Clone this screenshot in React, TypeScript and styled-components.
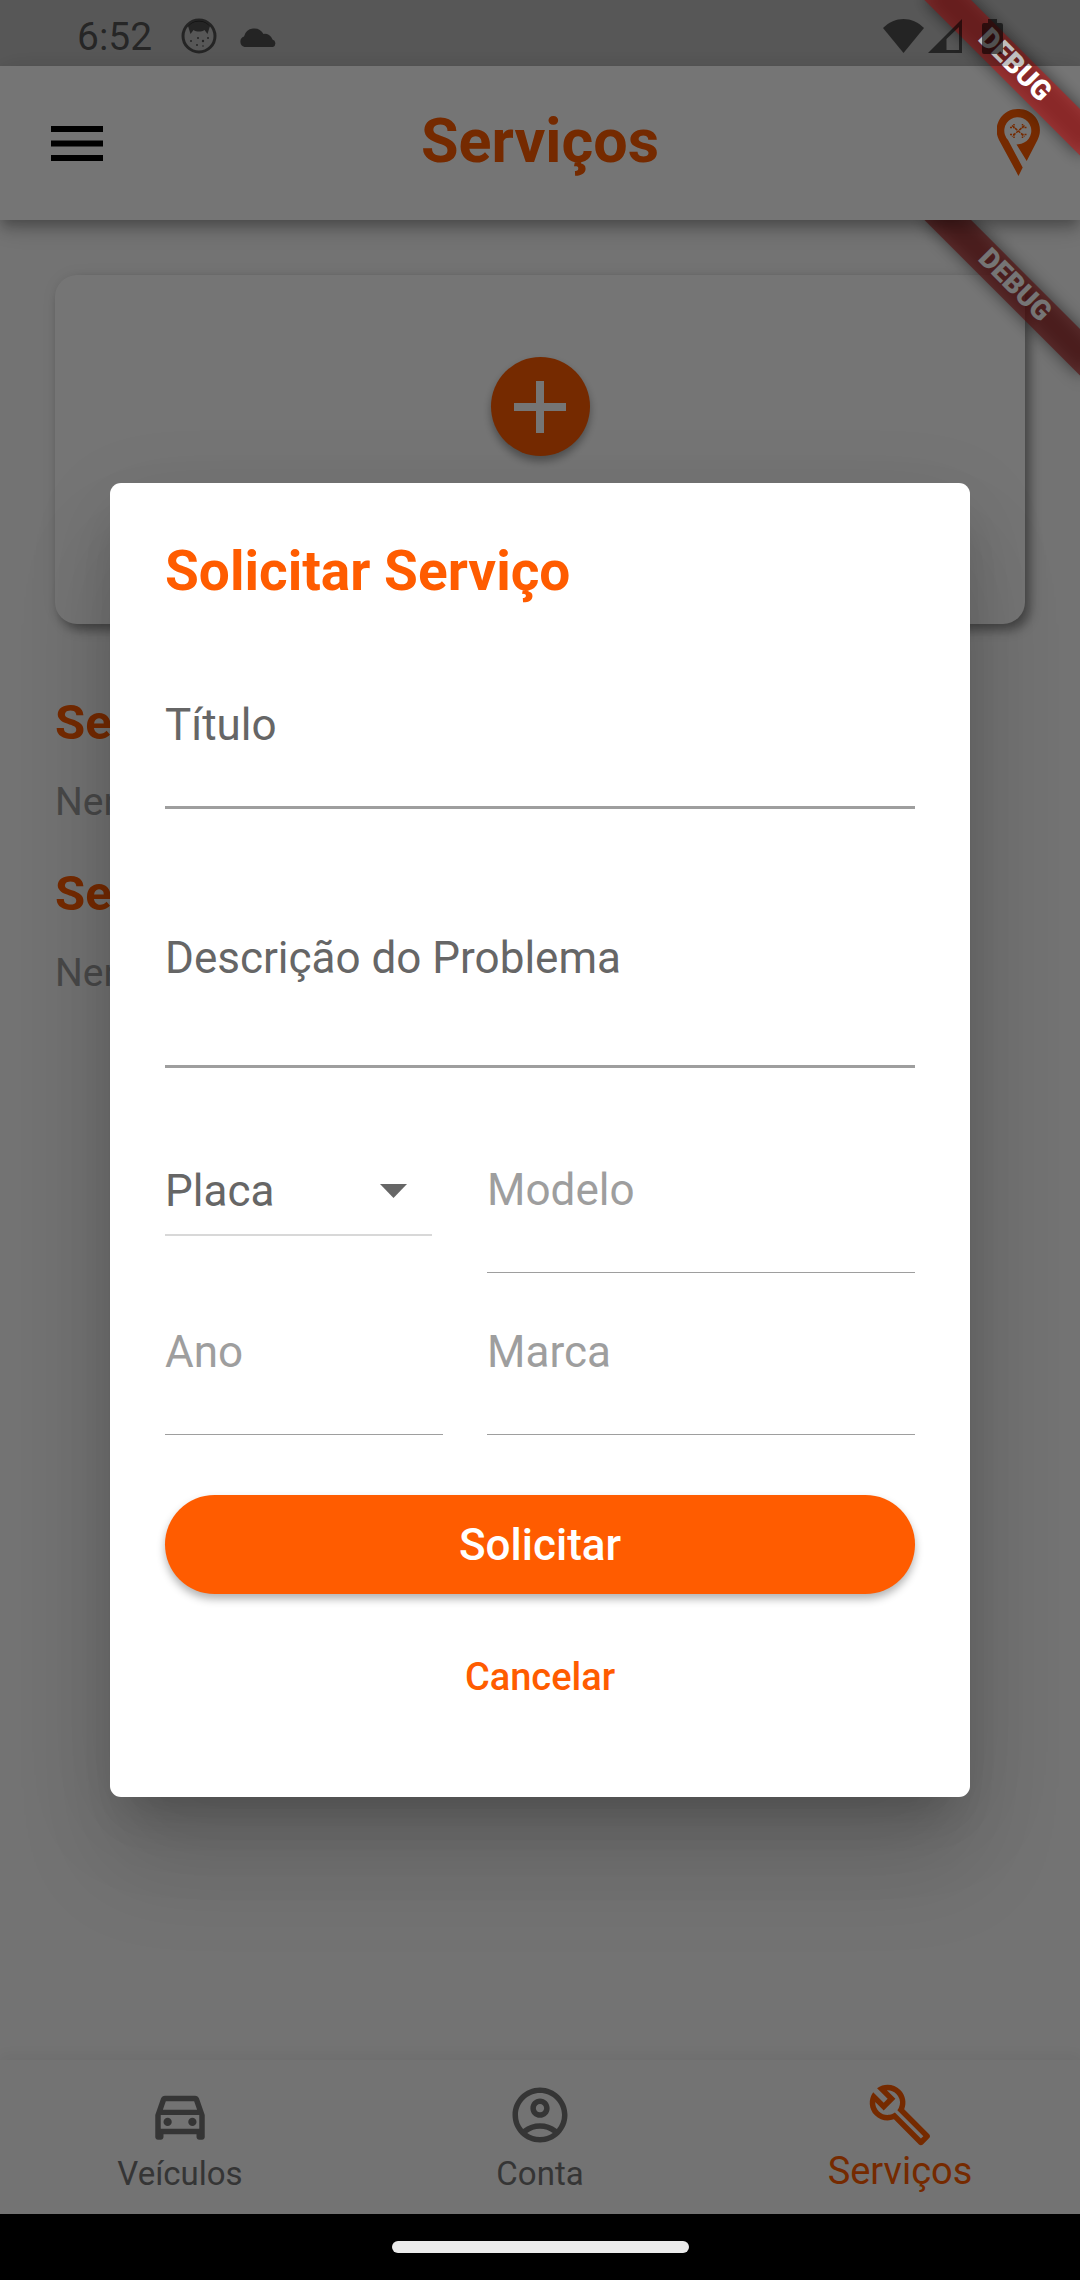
import React from 'react';
import styled, { createGlobalStyle } from 'styled-components';
import {
  MdOutlineAccountCircle,
  MdOutlineBuild,
  MdOutlineDirectionsCar,
} from 'react-icons/md';

const orange = '#ff5c00';

const GlobalStyle = createGlobalStyle`
  *, *::before, *::after { box-sizing: border-box; }
  body { margin: 0; font-family: Roboto, "Liberation Sans", sans-serif; }
  h1, h2, p { margin: 0; }
  button, input, select, textarea { font: inherit; color: inherit; }
`;

const Shell = styled.div`
  position: relative;
  display: flex;
  flex-direction: column;
  min-height: 100vh;
  overflow: hidden;
  background: #fff;
`;

/* ---------- system bars ---------- */

const StatusBar = styled.div`
  position: relative;
  z-index: 30;
  display: flex;
  align-items: center;
  justify-content: space-between;
  height: 66px;
  padding: 6px 77px 0;
  background: rgba(0, 0, 0, 0.25);
  color: rgba(0, 0, 0, 0.58);
  font-size: 39px;
  line-height: 46px;
`;

const StatusGroup = styled.div<{ $gap: number }>`
  display: flex;
  align-items: center;
  gap: ${(p) => p.$gap}px;

  svg {
    display: block;
  }
`;

const Clock = styled.time`
  margin-right: 7px;
  padding-top: 2px;
`;

const BatterySlot = styled.div`
  margin-left: 16px;
`;

const SystemNav = styled.div`
  position: relative;
  z-index: 30;
  display: flex;
  align-items: center;
  justify-content: center;
  height: 66px;
  background: #000;
`;

const Handle = styled.div`
  width: 297px;
  height: 12px;
  border-radius: 6px;
  background: #ebebeb;
`;

/* ---------- app bar ---------- */

const AppBar = styled.header`
  position: relative;
  z-index: 2;
  display: grid;
  grid-template-columns: 1fr auto 1fr;
  align-items: center;
  height: 154px;
  padding: 0 40px;
  background: #fff;
  box-shadow: 0 6px 11px -3px rgba(0, 0, 0, 0.2), 0 11px 14px rgba(0, 0, 0, 0.14),
    0 3px 28px rgba(0, 0, 0, 0.12);
`;

const AppTitle = styled.h1`
  padding-bottom: 4px;
  color: ${orange};
  font-size: 61px;
  font-weight: 700;
  line-height: 72px;
`;

const IconButton = styled.button`
  display: block;
  justify-self: start;
  padding: 0 11px;
  border: 0;
  background: none;
  color: #000;

  svg {
    display: block;
  }
`;

const Brand = styled.a`
  justify-self: end;
  color: ${orange};

  svg {
    display: block;
  }
`;

/* ---------- page ---------- */

const Page = styled.main`
  position: relative;
  z-index: 1;
  flex: 1;
  overflow: hidden;
  padding: 55px;
  background: #fafafa;
`;

const AddCard = styled.section`
  display: flex;
  justify-content: center;
  align-items: flex-start;
  height: 349px;
  margin-bottom: 70px;
  padding-top: 82px;
  border-radius: 22px;
  background: #fff;
  box-shadow: 5px 6px 11px rgba(0, 0, 0, 0.4), 0 0 16px rgba(0, 0, 0, 0.06);
`;

const AddButton = styled.button`
  display: grid;
  place-items: center;
  width: 99px;
  height: 99px;
  padding: 0;
  border: 0;
  border-radius: 50%;
  background: ${orange};
  color: #fff;
  box-shadow: 0 5px 8px rgba(0, 0, 0, 0.35);
`;

const ServiceSection = styled.section`
  margin-bottom: 40px;
`;

const SectionTitle = styled.h2`
  margin-bottom: 27px;
  color: ${orange};
  font-size: 49px;
  font-weight: 700;
  line-height: 58px;
`;

const SectionText = styled.p`
  color: #9e9e9e;
  font-size: 39px;
  line-height: 46px;
`;

/* ---------- debug ribbon ---------- */

const RibbonCorner = styled.div<{ $level: number }>`
  position: absolute;
  z-index: ${(p) => p.$level};
  top: 0;
  right: 0;
  width: 260px;
  height: 260px;
  overflow: hidden;
  pointer-events: none;
`;

const Ribbon = styled.div`
  position: absolute;
  top: 77px;
  right: -110px;
  display: grid;
  place-items: center;
  width: 220px;
  height: 33px;
  padding-bottom: 3px;
  color: #fff;
  font-size: 28px;
  font-weight: 900;
  line-height: 28px;
  transform: rotate(45deg);
  transform-origin: 110px -77px;

  &::before,
  &::after {
    content: '';
    position: absolute;
    inset: 0;
    z-index: -1;
    background: rgba(0, 0, 0, 0.5);
    filter: blur(8px);
  }

  &::after {
    background: rgba(183, 28, 28, 0.63);
    filter: none;
  }
`;

/* ---------- bottom navigation ---------- */

const BottomNav = styled.nav`
  position: relative;
  z-index: 2;
  display: grid;
  grid-template-columns: repeat(3, 1fr);
  height: 154px;
  background: #fafafa;
  box-shadow: 0 -3px 14px rgba(0, 0, 0, 0.06);
`;

const NavItem = styled.a<{ $active?: boolean }>`
  display: flex;
  flex-direction: column;
  align-items: center;
  padding-top: 22px;
  color: ${(p) => (p.$active ? orange : '#757575')};
  font-size: ${(p) => (p.$active ? 38 : 33)}px;
  line-height: ${(p) => (p.$active ? 46 : 52)}px;
  text-decoration: none;

  svg {
    flex: none;
    width: 66px;
    height: 66px;
  }
`;

/* ---------- dialog ---------- */

const Scrim = styled.div`
  position: absolute;
  inset: 0;
  z-index: 10;
  display: flex;
  align-items: center;
  justify-content: center;
  padding: 66px 110px;
  background: rgba(0, 0, 0, 0.54);
`;

const Dialog = styled.form`
  display: flex;
  flex-direction: column;
  width: 100%;
  padding: 55px 55px 71px;
  border-radius: 11px;
  background: #fff;
  box-shadow: 0 30px 41px -19px rgba(0, 0, 0, 0.18), 0 66px 100px rgba(0, 0, 0, 0.12),
    0 25px 90px rgba(0, 0, 0, 0.1);
`;

const DialogTitle = styled.h2`
  margin-bottom: 94px;
  color: ${orange};
  font-size: 55px;
  font-weight: 700;
  line-height: 66px;
`;

const Field = styled.div<{ $size?: 'tall' | 'normal'; $quiet?: boolean }>`
  display: grid;
  height: ${(p) => (p.$size === 'tall' ? 137 : p.$quiet ? 110 : 111)}px;
  border-bottom: ${(p) => (p.$quiet ? 1 : 3)}px solid #9e9e9e;
  color: ${(p) => (p.$quiet ? '#9e9e9e' : '#666')};
  font-size: 44px;
  line-height: 54px;

  > * {
    grid-area: 1 / 1;
  }
`;

const FieldLabel = styled.label`
  align-self: start;
  pointer-events: none;
`;

const control = `
  width: 100%;
  min-width: 0;
  margin: 0;
  padding: 0;
  border: 0;
  outline: 0;
  background: none;
  resize: none;
`;

const TextInput = styled.input`
  ${control}
`;

const TextArea = styled.textarea`
  ${control}
`;

const FieldStack = styled.div`
  display: flex;
  flex-direction: column;
  gap: 122px;
  margin-bottom: 95px;
`;

const VehicleGrid = styled.div`
  display: grid;
  grid-template-columns: 13fr 20fr;
  gap: 52px 44px;
  align-items: start;
  margin-bottom: 60px;
`;

const SelectField = styled.div`
  display: grid;
  align-items: center;
  height: 73px;
  margin-right: 11px;
  padding-bottom: 16px;
  border-bottom: 2px solid #d8d8d8;
  color: #666;
  font-size: 44px;
  line-height: 54px;

  > * {
    grid-area: 1 / 1;
  }

  svg {
    justify-self: end;
    margin-right: 25px;
    pointer-events: none;
  }
`;

const Select = styled.select`
  ${control}
  height: 54px;
  appearance: none;
`;

const SubmitButton = styled.button`
  height: 99px;
  margin-bottom: 33px;
  border: 0;
  border-radius: 50px;
  background: ${orange};
  color: #fff;
  font-size: 44px;
  font-weight: 500;
  box-shadow: 0 5px 8px rgba(0, 0, 0, 0.3);
`;

const CancelButton = styled.button`
  align-self: center;
  height: 99px;
  padding: 0 22px;
  border: 0;
  background: none;
  color: ${orange};
  font-size: 38px;
  font-weight: 500;
`;

/* ---------- drawings ---------- */

const FaceIcon = () => (
  <svg width="36" height="36" viewBox="0 0 36 36" aria-hidden="true">
    <circle cx="18" cy="18" r="16" fill="none" stroke="currentColor" strokeWidth="3" />
    <path
      d="M7 8C13 1 23 1 29 8l-2.500 8-3-4c-3 2-8 2-11 0l-3 4z"
      fill="currentColor"
    />
    <g fill="currentColor">
      <circle cx="10" cy="23" r="1" />
      <circle cx="17" cy="20" r="1" />
      <circle cx="22" cy="23" r="1.200" />
      <circle cx="16" cy="27" r="1" />
      <circle cx="22" cy="28" r="0.800" />
      <circle cx="27" cy="20" r="1" />
    </g>
  </svg>
);

const CloudIcon = () => (
  <svg width="38" height="21" viewBox="0 0 38 21" aria-hidden="true">
    <path
      d="M5.500 21A5.500 5.500 0 0 1 5 10.500A10.500 10.500 0 0 1 24.500 8A8 8 0 0 1 33.500 13.500A4 4 0 0 1 34 21z"
      fill="currentColor"
    />
  </svg>
);

const WifiIcon = () => (
  <svg width="41" height="34" viewBox="0 0 41 34" aria-hidden="true">
    <path d="M0 9C12-3 29-3 41 9L20.500 34z" fill="currentColor" />
  </svg>
);

const SignalIcon = () => (
  <svg width="34" height="34" viewBox="0 0 34 34" aria-hidden="true">
    <path
      fillRule="evenodd"
      d="M0 34 34 0v34zM18.500 20v11H31V8z"
      fill="currentColor"
    />
  </svg>
);

const BatteryIcon = () => (
  <svg width="21" height="35" viewBox="0 0 21 35" aria-hidden="true">
    <path
      d="M6 0h9v4h4a2 2 0 0 1 2 2v27a2 2 0 0 1-2 2H2a2 2 0 0 1-2-2V6a2 2 0 0 1 2-2h4z"
      fill="currentColor"
    />
  </svg>
);

const MenuIcon = () => (
  <svg width="52" height="35" viewBox="0 0 52 35" aria-hidden="true">
    <path d="M0 0h52v6H0zM0 14.500h52v6H0zM0 29h52v6H0z" fill="currentColor" />
  </svg>
);

const PinLogo = () => (
  <svg width="43" height="68" viewBox="0 0 43 68" aria-hidden="true">
    <path
      fill="currentColor"
      d="M21.200 0A21.200 21.200 0 0 0 2 31L21.500 67l4.200-8.500L11 31A13.500 13.500 0 1 1 21.300 35.200L19.500 35.500 29.700 52 40.500 31A21.200 21.200 0 0 0 21.200 0z"
    />
    <g stroke="currentColor" strokeWidth="1.500" fill="none">
      <path d="M15 16.500l12.500 11M27.500 16.500L15 27.500" strokeDasharray="3 1" />
      <path
        d="M13 18.500h4v-3.500M29.500 18.500h-4v-3.500M13 25.500h4v3.500M29.500 25.500h-4v3.500"
        strokeDasharray="2 1"
      />
    </g>
  </svg>
);

const PlusIcon = () => (
  <svg width="52" height="52" viewBox="0 0 52 52" aria-hidden="true">
    <path d="M22 0h8v22h22v8H30v22h-8V30H0v-8h22z" fill="currentColor" />
  </svg>
);

const CaretIcon = () => (
  <svg width="27" height="14" viewBox="0 0 27 14" aria-hidden="true">
    <path d="M0 0h27L13.500 14z" fill="currentColor" />
  </svg>
);

/* ---------- parts ---------- */

const DebugRibbon = ({ level }: { level: number }) => (
  <RibbonCorner $level={level}>
    <Ribbon>DEBUG</Ribbon>
  </RibbonCorner>
);

type TextFieldProps = {
  id: string;
  label: string;
  multiline?: boolean;
  disabled?: boolean;
};

const TextField = ({ id, label, multiline, disabled }: TextFieldProps) => (
  <Field $size={multiline ? 'tall' : 'normal'} $quiet={disabled}>
    <FieldLabel htmlFor={id}>{label}</FieldLabel>
    {multiline ? (
      <TextArea id={id} name={id} rows={1} />
    ) : (
      <TextInput id={id} name={id} type="text" disabled={disabled} />
    )}
  </Field>
);

const services = [
  { title: 'Serviços Ativos', empty: 'Nenhum serviço ativo' },
  { title: 'Serviços Concluídos', empty: 'Nenhum serviço concluído' },
];

export default function App() {
  return (
    <>
      <GlobalStyle />
      <Shell>
        <StatusBar>
          <StatusGroup $gap={22}>
            <Clock>6:52</Clock>
            <FaceIcon />
            <CloudIcon />
          </StatusGroup>
          <StatusGroup $gap={4}>
            <WifiIcon />
            <SignalIcon />
            <BatterySlot>
              <BatteryIcon />
            </BatterySlot>
          </StatusGroup>
        </StatusBar>

        <AppBar>
          <IconButton type="button" aria-label="Menu">
            <MenuIcon />
          </IconButton>
          <AppTitle>Serviços</AppTitle>
          <Brand href="#mapa" aria-label="Mapa">
            <PinLogo />
          </Brand>
        </AppBar>

        <Page>
          <AddCard>
            <AddButton type="button" aria-label="Adicionar">
              <PlusIcon />
            </AddButton>
          </AddCard>
          {services.map((s) => (
            <ServiceSection key={s.title}>
              <SectionTitle>{s.title}</SectionTitle>
              <SectionText>{s.empty}</SectionText>
            </ServiceSection>
          ))}
          <DebugRibbon level={1} />
        </Page>

        <BottomNav>
          <NavItem href="#veiculos">
            <MdOutlineDirectionsCar />
            Veículos
          </NavItem>
          <NavItem href="#conta">
            <MdOutlineAccountCircle />
            Conta
          </NavItem>
          <NavItem href="#servicos" $active aria-current="page">
            <MdOutlineBuild />
            Serviços
          </NavItem>
        </BottomNav>

        <SystemNav>
          <Handle />
        </SystemNav>

        <Scrim>
          <Dialog role="dialog" aria-modal="true" aria-labelledby="dialog-title">
            <DialogTitle id="dialog-title">Solicitar Serviço</DialogTitle>
            <FieldStack>
              <TextField id="titulo" label="Título" />
              <TextField id="descricao" label="Descrição do Problema" multiline />
            </FieldStack>
            <VehicleGrid>
              <SelectField>
                <Select aria-label="Placa" name="placa" defaultValue="">
                  <option value="">Placa</option>
                </Select>
                <CaretIcon />
              </SelectField>
              <TextField id="modelo" label="Modelo" disabled />
              <TextField id="ano" label="Ano" disabled />
              <TextField id="marca" label="Marca" disabled />
            </VehicleGrid>
            <SubmitButton type="button">Solicitar</SubmitButton>
            <CancelButton type="button">Cancelar</CancelButton>
          </Dialog>
        </Scrim>

        <DebugRibbon level={20} />
      </Shell>
    </>
  );
}
